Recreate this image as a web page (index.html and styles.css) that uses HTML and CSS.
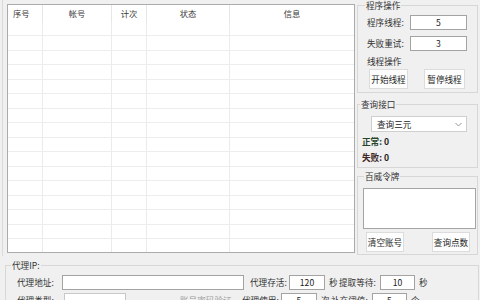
FILE: index.html
```html
<!DOCTYPE html>
<html lang="zh">
<head>
<meta charset="utf-8">
<link rel="stylesheet" href="styles.css">
</head>
<body>
<div class="app">
  <div class="top">
    <div class="left">
      <div class="grid">
        <div class="row head">
          <div class="c c1">序号</div><div class="c c2">帐号</div><div class="c c3">计次</div><div class="c c4">状态</div><div class="c c5">信息</div>
        </div>
        <div class="row"><div class="c c1"></div><div class="c c2"></div><div class="c c3"></div><div class="c c4"></div><div class="c c5"></div></div>
        <div class="row"><div class="c c1"></div><div class="c c2"></div><div class="c c3"></div><div class="c c4"></div><div class="c c5"></div></div>
        <div class="row"><div class="c c1"></div><div class="c c2"></div><div class="c c3"></div><div class="c c4"></div><div class="c c5"></div></div>
        <div class="row"><div class="c c1"></div><div class="c c2"></div><div class="c c3"></div><div class="c c4"></div><div class="c c5"></div></div>
        <div class="row"><div class="c c1"></div><div class="c c2"></div><div class="c c3"></div><div class="c c4"></div><div class="c c5"></div></div>
        <div class="row"><div class="c c1"></div><div class="c c2"></div><div class="c c3"></div><div class="c c4"></div><div class="c c5"></div></div>
        <div class="row"><div class="c c1"></div><div class="c c2"></div><div class="c c3"></div><div class="c c4"></div><div class="c c5"></div></div>
        <div class="row"><div class="c c1"></div><div class="c c2"></div><div class="c c3"></div><div class="c c4"></div><div class="c c5"></div></div>
        <div class="row"><div class="c c1"></div><div class="c c2"></div><div class="c c3"></div><div class="c c4"></div><div class="c c5"></div></div>
        <div class="row"><div class="c c1"></div><div class="c c2"></div><div class="c c3"></div><div class="c c4"></div><div class="c c5"></div></div>
        <div class="row"><div class="c c1"></div><div class="c c2"></div><div class="c c3"></div><div class="c c4"></div><div class="c c5"></div></div>
        <div class="row"><div class="c c1"></div><div class="c c2"></div><div class="c c3"></div><div class="c c4"></div><div class="c c5"></div></div>
        <div class="row"><div class="c c1"></div><div class="c c2"></div><div class="c c3"></div><div class="c c4"></div><div class="c c5"></div></div>
        <div class="row"><div class="c c1"></div><div class="c c2"></div><div class="c c3"></div><div class="c c4"></div><div class="c c5"></div></div>
        <div class="row"><div class="c c1"></div><div class="c c2"></div><div class="c c3"></div><div class="c c4"></div><div class="c c5"></div></div>
        <div class="row"><div class="c c1"></div><div class="c c2"></div><div class="c c3"></div><div class="c c4"></div><div class="c c5"></div></div>
      </div>
    </div>
    <div class="right">
      <fieldset class="fs fs1">
        <legend class="lg lg1">程序操作</legend>
        <div class="in1">
          <div class="frow"><span class="lab lw43">程序线程:</span><span class="tb w56">5</span></div>
          <div class="frow r2"><span class="lab lw43">失败重试:</span><span class="tb w56">3</span></div>
          <div class="sub">线程操作</div>
          <div class="brow b1">
            <span class="btn bw39">开始线程</span>
            <span class="btn bw41 ml16">暂停线程</span>
          </div>
        </div>
      </fieldset>
      <fieldset class="fs fs2">
        <legend class="lg lg2">查询接口</legend>
        <div class="in2">
          <div class="sel"><span>查询三元</span>
            <svg class="chev" width="7" height="5" viewBox="0 0 7 5"><path d="M0.5 1 L3.5 4 L6.5 1" fill="none" stroke="#8a8a8a" stroke-width="0.9"/></svg>
          </div>
          <div class="stat ok"><b class="g">正常:</b> <b>0</b></div>
          <div class="stat"><b class="r">失败:</b> <b>0</b></div>
        </div>
      </fieldset>
      <fieldset class="fs fs3">
        <legend class="lg lg3">百威令牌</legend>
        <div class="in3">
          <div class="ta"></div>
          <div class="brow b3">
            <span class="btn bw38 ml3">清空账号</span>
            <span class="btn bw38 ml29">查询点数</span>
          </div>
        </div>
      </fieldset>
    </div>
  </div>
  <fieldset class="fs proxy">
    <legend class="lg lgp">代理IP:</legend>
    <div class="inp">
      <div class="prow">
        <span class="lab lw45">代理地址:</span><span class="tb w182"></span>
        <span class="lab lw39 ml5">代理存活:</span><span class="tb w36">120</span>
        <span class="unit">秒</span>
        <span class="lab lw41">提取等待:</span><span class="tb w35">10</span>
        <span class="unit">秒</span>
      </div>
      <div class="prow p2">
        <span class="lab lw45">代理类型:</span><span class="tb w62 left">HTTP</span>
        <span class="lab grey">账号密码验证</span>
        <span class="lab lw39 ml5b">代理使用:</span><span class="tb w36">5</span>
        <span class="unit">次</span>
        <span class="lab lw41">补充阈值:</span><span class="tb w35">5</span>
        <span class="unit">个</span>
      </div>
    </div>
  </fieldset>
</div>
</body>
</html>
```
FILE: styles.css
```css
* { box-sizing: border-box; }
html, body {
  margin: 0;
  padding: 0;
  width: 480px;
  height: 300px;
  overflow: hidden;
  background: #f0f0f0;
}
body {
  font-family: "Noto Sans CJK SC", "Microsoft YaHei", sans-serif;
  font-size: 8.6px;
  line-height: 11px;
  color: #303030;
}
.app { display: flex; flex-direction: column; }
.top { display: flex; height: 256px; }

.left {
  margin-left: 2px;
  border-left: 1px solid #dadada;
  padding: 4px 0 0 4px;
}
.grid {
  width: 348px;
  height: 249px;
  border: 1px solid #ababab;
  background: #fff;
  overflow: hidden;
}
.row { display: flex; height: 14.47px; }
.row.head { height: 17px; }
.c {
  height: 100%;
  border-right: 1px solid #ebebeb;
  border-bottom: 1px solid #ededed;
}
.head .c {
  border-bottom: none;
  border-right-color: #e6e6e6;
  text-align: center;
  color: #3a3a3a;
  font-size: 8.3px;
  line-height: 17px;
}
.c1 { width: 35px; }
.head .c1 { text-align: left; padding-left: 5px; }
.c2 { width: 69px; }
.c3 { width: 35px; }
.c4 { width: 83px; }
.c5 { flex: 1; border-right: none; }

.right {
  margin-left: 2px;
  width: 121px;
  display: flex;
  flex-direction: column;
}
.fs {
  margin: 0;
  padding: 0;
  border: 1px solid #d7d7d7;
  min-inline-size: 0;
}
.lg {
  padding: 0 1px;
  line-height: 11px;
  color: #333;
}
.lg1 { margin-left: 7px; }
.lg2 { margin-left: 2px; }
.lg3 { margin-left: 6px; }
.lgp { margin-left: 5px; }

.in1 { padding: 4px 0 3px 9px; }
.frow { display: flex; align-items: center; height: 15px; }
.frow.r2 { margin-top: 6px; }
.lab { white-space: nowrap; flex: none; }
.lw43 { width: 43px; }
.lw45 { width: 45px; }
.lw39 { width: 39px; }
.lw41 { width: 41px; }
.tb {
  flex: none;
  height: 15px;
  border: 1px solid #a3a3a3;
  background: #fff;
  text-align: center;
  line-height: 13px;
  color: #222;
}
.tb.left { text-align: left; padding-left: 3px; border-color: #c8c8c8; }
.w56 { width: 57px; }
.w182 { width: 182px; }
.w36 { width: 36px; }
.w35 { width: 35px; }
.w62 { width: 62px; }
.sub { margin-top: 5px; height: 11px; }
.brow { display: flex; }
.b1 { margin-top: 2px; padding-left: 2px; }
.btn {
  flex: none;
  height: 20px;
  background: #fdfdfd;
  border: 1px solid #dcdcdc;
  text-align: center;
  line-height: 18px;
  color: #262626;
}
.bw39 { width: 39px; }
.bw41 { width: 41px; }
.bw38 { width: 38px; }
.ml16 { margin-left: 16px; }
.ml3 { margin-left: 3px; }
.ml29 { margin-left: 28px; }

.fs2 { margin-top: 6px; }
.in2 { padding: 6px 0 3px 4px; }
.sel {
  margin-left: 9px;
  width: 96px;
  height: 16px;
  border: 1px solid #cfcfcf;
  background: #fff;
  display: flex;
  align-items: center;
  justify-content: space-between;
  padding: 0 4px 0 5px;
  color: #222;
}
.chev { display: block; }
.stat { height: 13px; line-height: 13px; margin-top: 3px; color: #1e1e1e; }
.stat.ok { margin-top: 3px; }
.g { color: #25452a; }
.r { color: #3e2525; }

.fs3 { margin-top: 3px; }
.in3 { padding: 6px 0 2px 5px; }
.ta {
  width: 113px;
  height: 41px;
  border: 1px solid #a5a5a5;
  background: #fff;
}
.b3 { margin-top: 3px; }

.proxy {
  margin: 4px 0 0 5px;
  width: 474px;
  height: 60px;
}
.inp { padding: 4px 0 0 11px; }
.prow { display: flex; align-items: center; height: 15px; }
.prow.p2 { margin-top: 3px; }
.ml5 { margin-left: 6px; }
.ml5b { margin-left: 4px; }
.unit { width: 10px; margin-left: 4px; flex: none; }
.grey { color: #9a9a9a; margin-left: 54px; width: 58px; }
```
